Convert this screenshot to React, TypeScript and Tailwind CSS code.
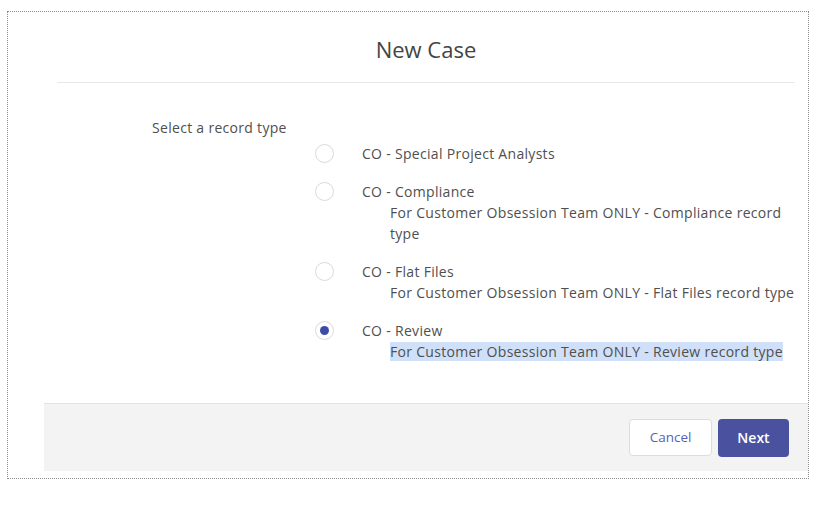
const recordTypes = [
  { name: "CO - Special Project Analysts", desc: null as string[] | null },
  { name: "CO - Compliance", desc: ["For Customer Obsession Team ONLY - Compliance record", "type"] },
  { name: "CO - Flat Files", desc: ["For Customer Obsession Team ONLY - Flat Files record type"] },
  { name: "CO - Review", desc: ["For Customer Obsession Team ONLY - Review record type"] },
];

function Radio({ checked }: { checked: boolean }) {
  return (
    <span className="mt-[1px] flex h-[19px] w-[19px] shrink-0 items-center justify-center rounded-full border border-[#dadada] bg-white">
      {checked && <span className="h-[9px] w-[9px] rounded-full bg-[#3c4ca6]" />}
    </span>
  );
}

export default function App() {
  const selected = 3;

  return (
    <div className="h-[510px] w-[836px] bg-white pl-[7px] pt-[11px] text-[#4f4f4f] [font-family:'Open_Sans',sans-serif]">
      <div className="flex h-[468px] w-[802px] flex-col border border-dotted border-[#8a8a8a] pl-[36px]">
        <div className="mx-[13px] border-b border-[#e8e8e8] pt-[23px] pb-[18px] text-center text-[22px] leading-[29px] text-[#444]">
          New Case
        </div>

        <div className="flex-1 pt-[35px] tracking-[0.3px]">
          <div className="pl-[108px] text-[14px] leading-[20px]">Select a record type</div>

          <div className="mt-[5px] flex flex-col gap-[17px] pl-[271px] text-[14px] leading-[21px]">
            {recordTypes.map((rt, i) => (
              <div key={rt.name} className="flex gap-[28px]">
                <Radio checked={i === selected} />
                <div>
                  <div className="whitespace-nowrap">{rt.name}</div>
                  {rt.desc && (
                    <div className="pl-[28px]">
                      {rt.desc.map((line) => (
                        <div key={line} className="whitespace-nowrap">
                          <span className={i === selected ? "bg-[#cfe0f8]" : ""}>{line}</span>
                        </div>
                      ))}
                    </div>
                  )}
                </div>
              </div>
            ))}
          </div>
        </div>

        <div className="mb-[7px] flex h-[68px] items-center justify-end gap-[6px] border-t border-[#e3e3e3] bg-[#f3f3f3] pr-[19px]">
          <button className="h-[37px] w-[83px] rounded-[4px] border border-[#dcdcdc] bg-white text-[13.5px] text-[#5563b4]">
            Cancel
          </button>
          <button className="h-[38px] w-[71px] rounded-[4px] bg-[#4a52a0] text-[14px] font-semibold text-white">
            Next
          </button>
        </div>
      </div>
    </div>
  );
}
